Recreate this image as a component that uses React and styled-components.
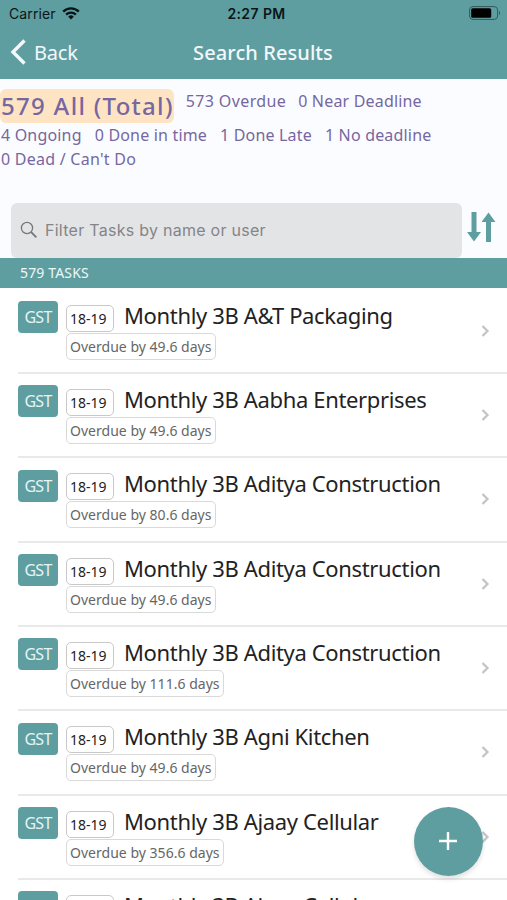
import React from 'react'
import styled, { createGlobalStyle, css } from 'styled-components'

const teal = '#5f9ea0'
const ink = '#7667a0'

const GlobalStyle = createGlobalStyle`
  * {
    box-sizing: border-box;
  }
  body {
    margin: 0;
    background: #fff;
    font-family: "Noto Sans", "Open Sans", sans-serif;
    overflow: hidden;
  }
`

const Screen = styled.div`
  position: relative;
  display: flex;
  flex-direction: column;
  width: 507px;
  height: 900px;
  overflow: hidden;
  background: #fff;
`

const StatusBar = styled.div`
  display: grid;
  grid-template-columns: 1fr auto 1fr;
  align-items: center;
  height: 27px;
  flex: none;
  padding: 0 6px 0 9px;
  background: ${teal};
  color: #0b1518;
  font-family: Inter, sans-serif;
  font-size: 14px;
`

const Carrier = styled.div`
  display: flex;
  align-items: center;
  gap: 6px;
  letter-spacing: 0.1px;
`

const Clock = styled.div`
  font-weight: 600;
  letter-spacing: 0.4px;
  padding-left: 3px;
`

const Battery = styled.svg`
  justify-self: end;
  margin-bottom: 1px;
`

const NavBar = styled.header`
  display: grid;
  grid-template-columns: 1fr auto 1fr;
  align-items: center;
  height: 52px;
  flex: none;
  padding: 0 10px 2px;
  background: ${teal};
  color: #f3f8fa;
`

const Back = styled.div`
  display: flex;
  align-items: center;
  gap: 8px;
  font-size: 20px;
  letter-spacing: -0.2px;
`

const NavTitle = styled.h1`
  margin: 0;
  padding-left: 19px;
  font-size: 20px;
  font-weight: 500;
  letter-spacing: 0.08px;
`

const Summary = styled.section`
  display: flex;
  flex-direction: column;
  height: 124px;
  flex: none;
  padding: 10px 0 0 1px;
  background: #fbfcff;
  color: ${ink};
`

const SummaryLine = styled.div`
  display: flex;
  gap: 13px;
  height: 24px;
  line-height: 25px;
  ${props => props.$first && css`
    gap: 12px;
    height: 34px;
  `}
`

const Stat = styled.span`
  font-size: 16px;
  white-space: nowrap;
  letter-spacing: ${props => props.$track || 0.18}px;
`

const ActiveStat = styled.span`
  height: 34px;
  margin-left: -1px;
  padding: 0 0 0 1px;
  border-radius: 6px;
  background: #ffe4c4;
  font-size: 24px;
  font-weight: 500;
  line-height: 34px;
  letter-spacing: 1.3px;
  white-space: nowrap;
`

const FilterBar = styled.div`
  display: flex;
  gap: 5px;
  height: 55px;
  flex: none;
  padding-left: 11px;
  background: #fbfcff;
`

const FilterField = styled.div`
  display: flex;
  align-items: center;
  gap: 7px;
  width: 451px;
  height: 55px;
  padding: 0 0 2px 9px;
  border-radius: 6px;
  background: #e3e4e6;
  color: #858588;
  font-family: Inter, sans-serif;
  font-size: 16px;
  letter-spacing: 0.27px;
`

const SortIcon = styled.svg`
  margin-top: 8px;
`

const GroupHeader = styled.div`
  height: 30px;
  flex: none;
  padding-left: 20px;
  background: ${teal};
  color: #eef7f9;
  font-size: 14px;
  line-height: 30px;
  letter-spacing: 0.15px;
`

const List = styled.ul`
  margin: 0;
  padding: 1.5px 0 0;
  list-style: none;
`

const Row = styled.li`
  display: flex;
  height: 84.35px;
  margin-left: 18px;
  border-bottom: 2px solid #e9e9e9;
`

const Tag = styled.span`
  width: 40px;
  height: 32px;
  margin-top: 11.5px;
  border-radius: 4px;
  background: ${teal};
  color: #e6f4f5;
  font-size: 16px;
  line-height: 33px;
  letter-spacing: -0.7px;
  text-align: center;
`

const Details = styled.div`
  flex: 1;
  min-width: 0;
  padding: 10px 0 0 8px;
`

const Heading = styled.div`
  display: flex;
  height: 33px;
`

const Pill = styled.span`
  display: block;
  width: max-content;
  height: 27px;
  padding: 0 3px;
  border: 1px solid #d9d9d9;
  border-radius: 5px;
  color: #666;
  font-size: 14px;
  line-height: 25px;
  letter-spacing: 0.02px;
  white-space: nowrap;
`

const Year = styled(Pill)`
  width: 48px;
  margin-top: 5px;
  border-color: #c9c9c9;
  color: #222;
`

const TaskName = styled.span`
  margin-left: 10px;
  color: #222;
  font-size: 22px;
  line-height: 31px;
  letter-spacing: -0.35px;
  white-space: nowrap;
`

const Chevron = styled.svg`
  margin: 34px 17px 0 0;
  flex: none;
`

const AddButton = styled.button`
  position: absolute;
  left: 414px;
  top: 807px;
  display: flex;
  align-items: center;
  justify-content: center;
  width: 69px;
  height: 69px;
  padding: 0 1px 1px 0;
  border: 0;
  border-radius: 50%;
  background: ${teal};
  box-shadow: 0 3px 5px rgba(0, 0, 0, 0.12);
`

const tasks = [
  { name: 'Monthly 3B A&T Packaging', overdue: '49.6' },
  { name: 'Monthly 3B Aabha Enterprises', overdue: '49.6' },
  { name: 'Monthly 3B Aditya Construction', overdue: '80.6' },
  { name: 'Monthly 3B Aditya Construction', overdue: '49.6' },
  { name: 'Monthly 3B Aditya Construction', overdue: '111.6' },
  { name: 'Monthly 3B Agni Kitchen', overdue: '49.6' },
  { name: 'Monthly 3B Ajaay Cellular', overdue: '356.6' },
  { name: 'Monthly 3B Ajaay Cellular', overdue: '49.6' }
]

const Task = ({ name, overdue }) => (
  <Row>
    <Tag>GST</Tag>
    <Details>
      <Heading>
        <Year>18-19</Year>
        <TaskName>{name}</TaskName>
      </Heading>
      <Pill>Overdue by {overdue} days</Pill>
    </Details>
    <Chevron width="9" height="14" viewBox="0 0 9 14" fill="none" stroke="#c4c4c6" strokeWidth="2.3">
      <path d="M1.5 2 L6.5 7 L1.5 12" />
    </Chevron>
  </Row>
)

export default function App() {
  return (
    <Screen>
      <GlobalStyle />
      <StatusBar>
        <Carrier>
          Carrier
          <svg width="18" height="13" viewBox="0 0 18 13" fill="none" stroke="#0b1518" strokeWidth="2.3">
            <path d="M1.2 4.6 A11 11 0 0 1 16.8 4.6" />
            <path d="M4.1 7.6 A7 7 0 0 1 13.9 7.6" />
            <path d="M6.2 9.7 A4 4 0 0 1 11.8 9.7 L9 12.5 Z" fill="#0b1518" stroke="none" />
          </svg>
        </Carrier>
        <Clock>2:27 PM</Clock>
        <Battery width="32" height="14" viewBox="0 0 32 14">
          <rect x="0.6" y="0.6" width="28" height="12.8" rx="3.4" fill="none" stroke="#34585b" strokeWidth="1" />
          <rect x="2.2" y="2.2" width="20" height="9.6" rx="1.6" fill="#000" />
          <path d="M30 4.8 Q32 7 30 9.2 Z" fill="#34585b" />
        </Battery>
      </StatusBar>
      <NavBar>
        <Back>
          <svg width="16" height="26" viewBox="0 0 16 26" fill="none" stroke="#f3f8fa" strokeWidth="3.4">
            <path d="M14.5 1.5 L3 13 L14.5 24.5" />
          </svg>
          Back
        </Back>
        <NavTitle>Search Results</NavTitle>
      </NavBar>
      <Summary>
        <SummaryLine $first>
          <ActiveStat>579 All (Total)</ActiveStat>
          <Stat $track={0.38}>573 Overdue</Stat>
          <Stat>0 Near Deadline</Stat>
        </SummaryLine>
        <SummaryLine>
          <Stat>4 Ongoing</Stat>
          <Stat>0 Done in time</Stat>
          <Stat>1 Done Late</Stat>
          <Stat>1 No deadline</Stat>
        </SummaryLine>
        <SummaryLine>
          <Stat $track={0.25}>0 Dead / Can't Do</Stat>
        </SummaryLine>
      </Summary>
      <FilterBar>
        <FilterField>
          <svg width="18" height="18" viewBox="0 0 18 18" fill="none" stroke="#77777a" strokeWidth="1.3">
            <circle cx="7" cy="7" r="5.6" />
            <path d="M11.2 11.2 L16.3 16.3" strokeWidth="1.9" />
          </svg>
          Filter Tasks by name or user
        </FilterField>
        <SortIcon width="29" height="32" viewBox="0 0 29 32" fill={teal}>
          <path d="M4.5 1 H9.5 V21 H14 L7 30.5 L0 21 H4.5 Z" />
          <path d="M19 31 H24 V11 H28.5 L21.5 1.5 L14.5 11 H19 Z" />
        </SortIcon>
      </FilterBar>
      <GroupHeader>579 TASKS</GroupHeader>
      <List>
        {tasks.map((task, i) => (
          <Task key={i} {...task} />
        ))}
      </List>
      <AddButton aria-label="Add task">
        <svg width="18" height="18" viewBox="0 0 18 18" fill="none" stroke="#fff" strokeWidth="2.4">
          <path d="M9 0 V18 M0 9 H18" />
        </svg>
      </AddButton>
    </Screen>
  )
}
